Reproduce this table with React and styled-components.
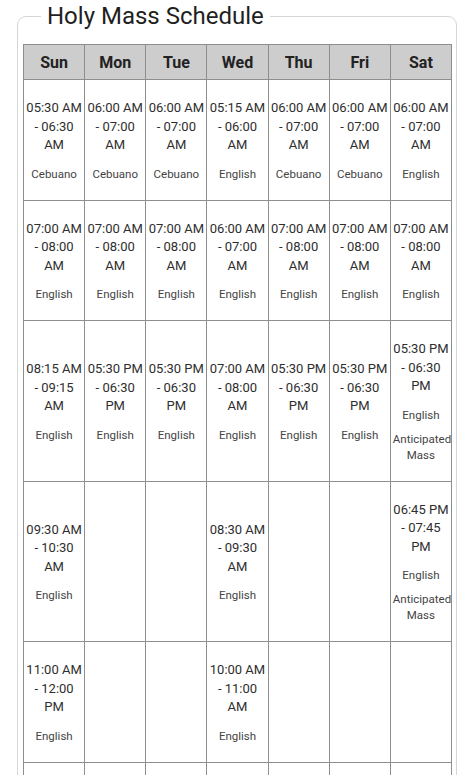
import React from 'react';
import styled, { createGlobalStyle } from 'styled-components';

const GlobalStyle = createGlobalStyle`
  body {
    margin: 0;
    background: #fff;
    font-family: Roboto, "Noto Sans", Arial, sans-serif;
  }
`;

const Page = styled.div`
  padding: 2px 17px 0 17px;
  width: 440px;
`;

const Frame = styled.fieldset`
  margin: 0;
  padding: 14px 4px 8px 5px;
  border: 1.5px solid #d6d6d6;
  border-radius: 9px;
  min-width: 0;
`;

const Legend = styled.legend`
  margin-left: 18px;
  padding: 0 6px;
  font-size: 24px;
  line-height: 28px;
  color: #1f1f1f;
  font-weight: 400;
`;

const Table = styled.table`
  width: 429px;
  table-layout: fixed;
  border-collapse: collapse;
`;

const HeadCell = styled.th`
  height: 34px;
  padding: 0;
  background: #cdcdcd;
  border: 1px solid #8e8e8e;
  font-size: 16px;
  font-weight: 700;
  color: #222;
  text-align: center;
`;

const Cell = styled.td`
  padding: 19px 2px 18px;
  border: 1px solid #8e8e8e;
  text-align: center;
  vertical-align: middle;
`;

const Time = styled.div`
  font-size: 13px;
  line-height: 18.5px;
  color: #2e2e2e;
`;

const Label = styled.div`
  margin-top: ${p => (p.$note ? '8px' : '11px')};
  font-size: 11.5px;
  line-height: 16px;
  color: #444;
`;

const days = ['Sun', 'Mon', 'Tue', 'Wed', 'Thu', 'Fri', 'Sat'];

const E = 'English';
const C = 'Cebuano';
const AM = 'Anticipated Mass';

const rows = [
  [
    ['05:30 AM - 06:30 AM', C],
    ['06:00 AM - 07:00 AM', C],
    ['06:00 AM - 07:00 AM', C],
    ['05:15 AM - 06:00 AM', E],
    ['06:00 AM - 07:00 AM', C],
    ['06:00 AM - 07:00 AM', C],
    ['06:00 AM - 07:00 AM', E],
  ],
  [
    ['07:00 AM - 08:00 AM', E],
    ['07:00 AM - 08:00 AM', E],
    ['07:00 AM - 08:00 AM', E],
    ['06:00 AM - 07:00 AM', E],
    ['07:00 AM - 08:00 AM', E],
    ['07:00 AM - 08:00 AM', E],
    ['07:00 AM - 08:00 AM', E],
  ],
  [
    ['08:15 AM - 09:15 AM', E],
    ['05:30 PM - 06:30 PM', E],
    ['05:30 PM - 06:30 PM', E],
    ['07:00 AM - 08:00 AM', E],
    ['05:30 PM - 06:30 PM', E],
    ['05:30 PM - 06:30 PM', E],
    ['05:30 PM - 06:30 PM', E, AM],
  ],
  [
    ['09:30 AM - 10:30 AM', E],
    null,
    null,
    ['08:30 AM - 09:30 AM', E],
    null,
    null,
    ['06:45 PM - 07:45 PM', E, AM],
  ],
  [
    ['11:00 AM - 12:00 PM', E],
    null,
    null,
    ['10:00 AM - 11:00 AM', E],
    null,
    null,
    null,
  ],
  [
    ['05:00 PM - 06:00 PM', E],
    null,
    null,
    ['05:30 PM - 06:30 PM', E],
    null,
    null,
    null,
  ],
];

function MassCell({ entry }) {
  if (!entry) return <Cell />;
  const [time, lang, note] = entry;
  return (
    <Cell>
      <Time>{time}</Time>
      <Label>{lang}</Label>
      {note && <Label $note>{note}</Label>}
    </Cell>
  );
}

export default function App() {
  return (
    <Page>
      <GlobalStyle />
      <Frame>
        <Legend>Holy Mass Schedule</Legend>
        <Table>
          <thead>
            <tr>
              {days.map(d => (
                <HeadCell key={d}>{d}</HeadCell>
              ))}
            </tr>
          </thead>
          <tbody>
            {rows.map((row, i) => (
              <tr key={i}>
                {row.map((entry, j) => (
                  <MassCell key={j} entry={entry} />
                ))}
              </tr>
            ))}
          </tbody>
        </Table>
      </Frame>
    </Page>
  );
}
